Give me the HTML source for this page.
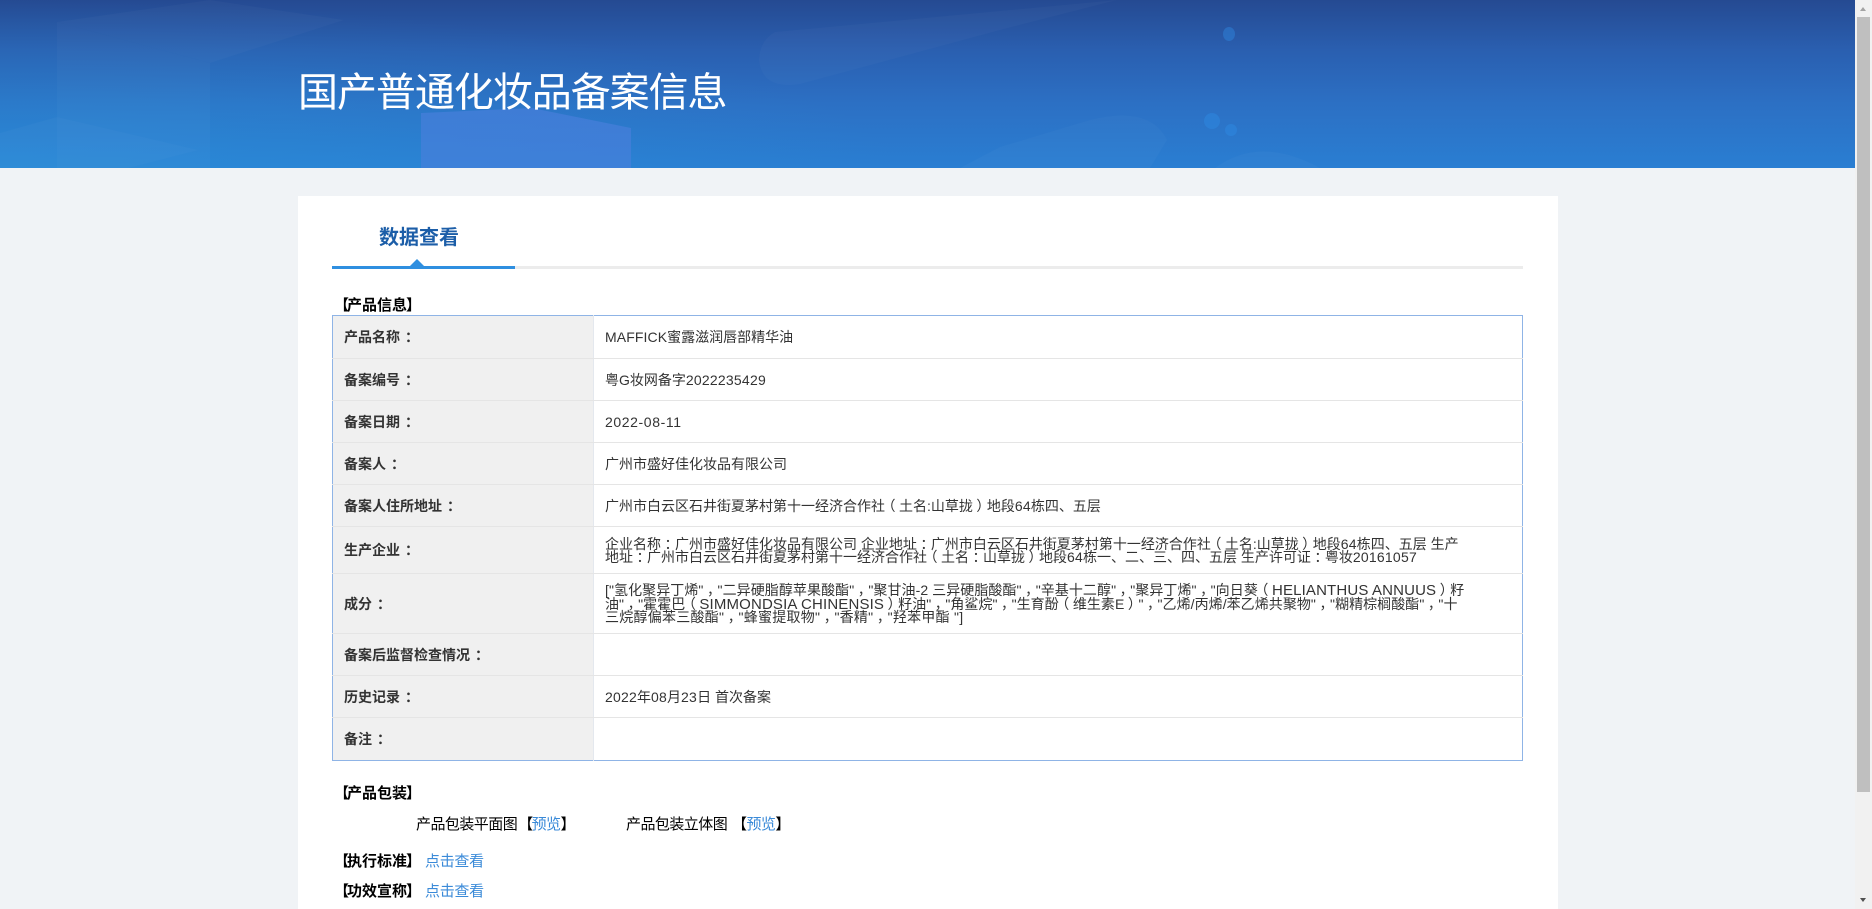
<!DOCTYPE html>
<html lang="zh-CN">
<head>
<meta charset="utf-8">
<title>国产普通化妆品备案信息</title>
<style>
html,body{margin:0;padding:0;width:1872px;height:909px;overflow:hidden;background:#f0f3f6;}
body{position:relative;font-family:"Liberation Sans","Noto Sans CJK SC",sans-serif;font-size:14px;color:#333;}
.banner{position:absolute;left:0;top:0;width:1855px;height:168px;background:radial-gradient(ellipse 900px 170px at 0 168px,rgba(40,160,225,.35),rgba(40,160,225,0)),linear-gradient(180deg,#254a92 0%,#2a5fb0 30%,#2c70c4 62%,#2a7ed2 100%);overflow:hidden;}
.banner svg{position:absolute;left:0;top:0;}
.banner h1{position:absolute;left:298px;top:69px;margin:0;font-size:40px;letter-spacing:-1.05px;line-height:48px;font-weight:400;color:#fff;white-space:nowrap;}
.card{position:absolute;left:298px;top:196px;width:1260px;height:713px;background:#fff;}
.abs{position:absolute;white-space:nowrap;line-height:20px;}
.tab{left:379px;top:224px;font-size:20px;line-height:28px;font-weight:700;color:#1c5ea8;}
.line{position:absolute;left:332px;top:266px;width:1191px;height:3px;background:#ececec;}
.line i{position:absolute;left:0;top:0;width:183px;height:3px;background:#2f8fe0;}
.tri{position:absolute;left:410px;top:259px;width:0;height:0;border-left:7px solid transparent;border-right:7px solid transparent;border-bottom:7px solid #2f8fe0;}
.h{font-weight:700;color:#000;font-size:15px;}
.lb,.rb{position:relative;}
.lb{left:2px;}
.rb{left:-1px;}
table{position:absolute;left:332px;top:315px;width:1191px;border-collapse:collapse;table-layout:fixed;border:1px solid #8fb4e6;}
th,td{padding:0;border-bottom:1px solid #e5e5e5;vertical-align:middle;font-size:14px;color:#333;}
tr:last-child th,tr:last-child td{border-bottom:none;}
th{width:249px;background:#f0f0f0;text-align:left;padding-left:11px;font-weight:700;border-right:1px solid #e4e8ee;}
td{padding-left:11px;padding-top:2px;line-height:13.4px;background:#fff;white-space:nowrap;}
tr{height:42px;}
.a{color:#3a8ad8;}
.k{color:#000;font-size:15px;letter-spacing:-.55px;}
i.c{font-style:normal;position:relative;left:3.5px;}
th i.c{left:5px;}
i.l,i.r{font-style:normal;display:inline-block;position:relative;}
i.l{left:-3.5px;}
i.r{left:3.5px;}
.n{letter-spacing:.22px;}
.la{font-size:15px;letter-spacing:.15px;}
.s{position:absolute;left:1855px;top:0;width:17px;height:909px;background:#f1f1f1;}
.s b{position:absolute;left:2px;top:17px;width:13px;height:775px;background:#bfbfbf;}
.s u{position:absolute;left:5px;width:0;height:0;border-left:3.5px solid transparent;border-right:3.5px solid transparent;}
</style>
</head>
<body>
<div class="banner">
<svg width="1855" height="168" viewBox="0 0 1855 168">
<g fill="#ffffff" fill-opacity="0.022">
<polygon points="57,22 210,0 344,20 210,63"/>
<polygon points="57,22 210,63 210,168 57,168"/>
<polygon points="0,133 57,117 198,150 128,168 0,168"/>
<path d="M775 32 L1117 0 L1000 30 L800 84 Q762 90 759 60 Q760 40 775 32Z"/>
<path d="M1000 147 L1090 120 Q1150 105 1167 140 L1150 168 L960 168Z"/>
<path d="M1215 168 Q1260 135 1320 168Z"/>
</g>
<polygon points="421,113 532,108 631,128 631,168 421,168" fill="#4a7fdc" fill-opacity="0.65"/>
<g fill="#2f8fe8" fill-opacity="0.4">
<ellipse cx="1229" cy="34" rx="6" ry="7"/>
<ellipse cx="1212" cy="121" rx="8" ry="8"/>
<ellipse cx="1231" cy="130" rx="6" ry="6"/>
</g>
</svg>
<h1>国产普通化妆品备案信息</h1>
</div>
<div class="card"></div>
<div class="abs tab">数据查看</div>
<div class="line"><i></i></div>
<div class="tri"></div>
<div class="abs h" style="left:332px;top:296px;"><span class="lb">【</span>产品信息<span class="rb">】</span></div>
<table>
<tr style="height:43px"><th>产品名称<i class="c">：</i></th><td><span style="letter-spacing:.1px">MAFFICK</span>蜜露滋润唇部精华油</td></tr>
<tr><th>备案编号<i class="c">：</i></th><td>粤G妆网备字<span class="n">2022235429</span></td></tr>
<tr><th>备案日期<i class="c">：</i></th><td><span style="letter-spacing:.6px">2022-08-11</span></td></tr>
<tr><th>备案人<i class="c">：</i></th><td>广州市盛好佳化妆品有限公司</td></tr>
<tr><th>备案人住所地址<i class="c">：</i></th><td>广州市白云区石井街夏茅村第十一经济合作社<i class="l">（</i>土名:山草拢<i class="r">）</i>地段<span class="n">64</span>栋四、五层</td></tr>
<tr style="height:47px"><th>生产企业<i class="c">：</i></th><td>企业名称<i class="c">：</i>广州市盛好佳化妆品有限公司 企业地址<i class="c">：</i>广州市白云区石井街夏茅村第十一经济合作社<i class="l">（</i>土名:山草拢<i class="r">）</i>地段<span class="n">64</span>栋四、五层 生产<br>地址<i class="c">：</i>广州市白云区石井街夏茅村第十一经济合作社<i class="l">（</i>土名<i class="c">：</i>山草拢<i class="r">）</i>地段<span class="n">64</span>栋一、二、三、四、五层 生产许可证<i class="c">：</i>粤妆<span class="n">20161057</span></td></tr>
<tr style="height:60px"><th>成分<i class="c">：</i></th><td><span style="letter-spacing:.07px">["氢化聚异丁烯"<i class="c">，</i>"二异硬脂醇苹果酸酯"<i class="c">，</i>"聚甘油-2 三异硬脂酸酯"<i class="c">，</i>"辛基十二醇"<i class="c">，</i>"聚异丁烯"<i class="c">，</i>"向日葵<i class="l">（</i><span class="la">HELIANTHUS ANNUUS</span><i class="r">）</i>籽</span><br><span style="letter-spacing:.05px">油"<i class="c">，</i>"霍霍巴<i class="l">（</i><span class="la">SIMMONDSIA CHINENSIS</span><i class="r">）</i>籽油"<i class="c">，</i>"角鲨烷"<i class="c">，</i>"生育酚<i class="l">（</i>维生素E<i class="r">）</i>"<i class="c">，</i>"乙烯/丙烯/苯乙烯共聚物"<i class="c">，</i>"糊精棕榈酸酯"<i class="c">，</i>"十</span><br><span style="letter-spacing:.25px">三烷醇偏苯三酸酯"<i class="c">，</i>"蜂蜜提取物"<i class="c">，</i>"香精"<i class="c">，</i>"羟苯甲酯 "]</span></td></tr>
<tr><th>备案后监督检查情况<i class="c">：</i></th><td></td></tr>
<tr><th>历史记录<i class="c">：</i></th><td><span class="n">2022</span>年<span class="n">08</span>月<span class="n">23</span>日 首次备案</td></tr>
<tr style="height:43px"><th>备注<i class="c">：</i></th><td></td></tr>
</table>
<div class="abs h" style="left:332px;top:784px;"><span class="lb">【</span>产品包装<span class="rb">】</span></div>
<div class="abs k" style="left:416px;top:815px;">产品包装平面图<span class="lb" style="left:1px">【</span><span class="a">预览</span>】</div>
<div class="abs k" style="left:626px;top:815px;">产品包装立体图</div>
<div class="abs k" style="left:732px;top:815px;"><span class="lb" style="left:0">【</span><span class="a">预览</span>】</div>
<div class="abs h" style="left:332px;top:852px;"><span class="lb">【</span>执行标准<span class="rb">】</span></div>
<div class="abs a" style="left:425px;top:852px;font-size:15px;letter-spacing:-.3px;">点击查看</div>
<div class="abs h" style="left:332px;top:882px;"><span class="lb">【</span>功效宣称<span class="rb">】</span></div>
<div class="abs a" style="left:425px;top:882px;font-size:15px;letter-spacing:-.3px;">点击查看</div>
<div class="s"><b></b>
<u style="top:7px;border-bottom:4px solid #a3a3a3;"></u>
<u style="top:898px;border-top:4px solid #505050;"></u>
</div>
</body>
</html>
